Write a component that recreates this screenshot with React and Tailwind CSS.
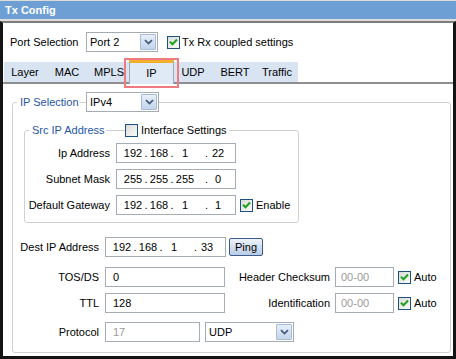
import React from 'react'

const Chevron = () => (
  <svg width="9" height="6" viewBox="0 0 9 6">
    <path d="M1 1.2 L4.5 4.6 L8 1.2" fill="none" stroke="#465a7d" strokeWidth="1.8" />
  </svg>
)

const Select = ({ value, className }) => (
  <div className={`flex h-[20px] items-stretch border border-[#a5acb5] bg-white ${className}`}>
    <span className="flex flex-1 items-center pl-[3px]">{value}</span>
    <span className="m-px flex w-[16px] items-center justify-center rounded-[1px] border border-[#a7bbd9] bg-linear-to-b from-[#e8eff9] to-[#c2d4ed]">
      <Chevron />
    </span>
  </div>
)

const Checkbox = ({ checked, className = '' }) => (
  <span
    className={`flex h-[13px] w-[13px] shrink-0 items-center justify-center border border-[#1c5180] bg-linear-to-br from-[#dcdcd6] to-[#fafafa] ${className}`}
  >
    {checked && (
      <svg width="9" height="8" viewBox="0 0 9 8">
        <path d="M1 3.8 L3.5 6.3 L8 1.5" fill="none" stroke="#21a121" strokeWidth="2" />
      </svg>
    )}
  </span>
)

const Field = ({ children, className = '', disabled }) => (
  <div
    className={`flex h-[20px] shrink-0 items-center border border-[#a5acb5] bg-white ${
      disabled ? 'text-[#9a9a9a]' : ''
    } ${className}`}
  >
    {children}
  </div>
)

// octets sit in fixed slots, like the old masked edit control
const IpValue = ({ parts }) => (
  <div className="flex items-center whitespace-nowrap">
    <span className="flex w-[20px] justify-center">{parts[0]}</span>
    <span className="flex w-[6px] justify-center">.</span>
    <span className="flex w-[20px] justify-center">{parts[1]}</span>
    <span className="flex w-[6px] justify-center">.</span>
    <span className="flex w-[20px] justify-center">{parts[2]}</span>
    <span className="flex w-[13px] justify-end">.</span>
    <span className="flex w-[20px] justify-center">{parts[3]}</span>
  </div>
)

const tabs = ['Layer', 'MAC', 'MPLS', 'IP', 'UDP', 'BERT', 'Traffic']

export default function App() {
  return (
    <div className="relative h-[359px] w-[456px] overflow-hidden bg-[#dcdcdc] pt-px font-['Liberation_Sans',Arial,sans-serif] text-[11px] text-black">
      <div className="h-[18px] bg-[#6d9fd4] pl-[5px] text-[11px] font-bold leading-[18px] text-white">Tx Config</div>

      <div className="mt-[2px] flex h-[338px] flex-col border-x-[3px] border-b-[3px] border-t-2 border-[#141414] border-t-[#7d7d7d] bg-white">
        <div className="mt-[9px] flex items-center pl-[7px]">
          <span className="w-[76px]">Port Selection</span>
          <Select value="Port 2" className="w-[72px]" />
          <Checkbox checked className="ml-[9px]" />
          <span className="ml-[2px]">Tx Rx coupled settings</span>
        </div>

        <div className="mt-[10px] flex h-[22px] items-end border-b-2 border-[#8f8f8f] pl-px">
          {tabs.map((t) =>
            t === 'IP' ? (
              <div
                key={t}
                className="relative z-10 -mb-[2px] -ml-px -mr-[2px] flex h-[24px] w-[45px] items-center justify-center border border-b-0 border-[#9fa9b8] border-t-[3px] border-t-[#f2b02e] bg-[#e0eaf6]"
              >
                {t}
              </div>
            ) : (
              <div key={t} className="flex h-[20px] w-[42px] items-center justify-center bg-[#d9e4f3]">
                {t}
              </div>
            )
          )}
        </div>

        <fieldset className="ml-[9px] mr-[2px] mt-[8px] rounded-[3px] border border-[#d0d0d0] pb-[10px]">
          <legend className="ml-[4px] flex h-[20px] items-center">
            <span className="w-[63px] pl-[3px] text-[#1f56a6]">IP Selection</span>
            <span className="h-px w-[6px] bg-[#d0d0d0]" />
            <Select value="IPv4" className="w-[73px]" />
          </legend>

          <fieldset className="ml-[11px] mt-[11px] w-[275px] rounded-[3px] border border-[#d0d0d0] pb-[7px]">
            <legend className="ml-[4px] flex h-[14px] items-center">
              <span className="w-[77px] pl-[3px] text-[#1f56a6]">Src IP Address</span>
              <span className="h-px w-[19px] bg-[#d0d0d0]" />
              <Checkbox />
              <span className="ml-[3px] pr-[2px]">Interface Settings</span>
            </legend>
            <div className="flex flex-col gap-[6px] pt-[6px]">
              <div className="flex items-center">
                <span className="w-[85px] text-right">Ip Address</span>
                <Field className="ml-[6px] w-[120px] pl-[6px]">
                  <IpValue parts={['192', '168', '1', '22']} />
                </Field>
              </div>
              <div className="flex items-center">
                <span className="w-[85px] text-right">Subnet Mask</span>
                <Field className="ml-[6px] w-[120px] pl-[6px]">
                  <IpValue parts={['255', '255', '255', '0']} />
                </Field>
              </div>
              <div className="flex items-center">
                <span className="w-[85px] text-right">Default Gateway</span>
                <Field className="ml-[6px] w-[120px] pl-[6px]">
                  <IpValue parts={['192', '168', '1', '1']} />
                </Field>
                <Checkbox checked className="ml-[4px]" />
                <span className="ml-[3px]">Enable</span>
              </div>
            </div>
          </fieldset>

          <div className="mt-[14px] flex items-center">
            <span className="w-[86px] text-right">Dest IP Address</span>
            <Field className="ml-[6px] w-[121px] pl-[6px]">
              <IpValue parts={['192', '168', '1', '33']} />
            </Field>
            <button className="ml-[3px] h-[18px] w-[34px] rounded-[2px] border border-[#3d5b8c] bg-linear-to-b from-[#eef3fa] to-[#b8cce6] text-[11px]">
              Ping
            </button>
          </div>

          <div className="mt-[10px] flex items-center">
            <span className="w-[86px] text-right">TOS/DS</span>
            <Field className="ml-[6px] w-[120px] pl-[7px]">0</Field>
            <span className="w-[105px] text-right">Header Checksum</span>
            <Field disabled className="ml-[5px] w-[59px] pl-[5px]">00-00</Field>
            <Checkbox checked className="ml-[4px]" />
            <span className="ml-[3px]">Auto</span>
          </div>

          <div className="mt-[6px] flex items-center">
            <span className="w-[86px] text-right">TTL</span>
            <Field className="ml-[6px] w-[120px] pl-[7px]">128</Field>
            <span className="w-[105px] text-right">Identification</span>
            <Field disabled className="ml-[5px] w-[59px] pl-[5px]">00-00</Field>
            <Checkbox checked className="ml-[4px]" />
            <span className="ml-[3px]">Auto</span>
          </div>

          <div className="mt-[9px] flex items-center">
            <span className="w-[86px] text-right">Protocol</span>
            <Field disabled className="ml-[6px] w-[95px] pl-[7px]">17</Field>
            <Select value="UDP" className="ml-[5px] w-[89px]" />
          </div>
        </fieldset>
      </div>

      <div className="absolute left-[124px] top-[58px] h-[30px] w-[55px] border-2 border-[#ef7a80]" />
    </div>
  )
}
